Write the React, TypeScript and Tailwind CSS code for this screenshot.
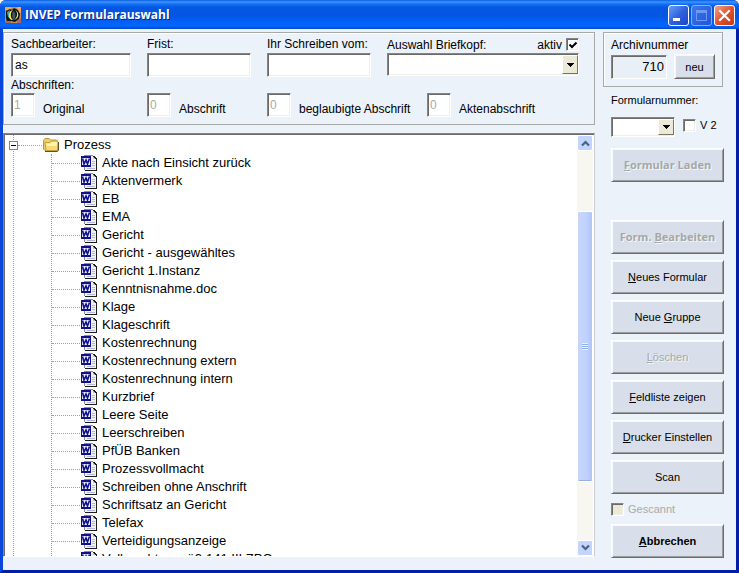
import type { ReactNode } from "react";

const FILES = [
  "Akte nach Einsicht zurück",
  "Aktenvermerk",
  "EB",
  "EMA",
  "Gericht",
  "Gericht - ausgewähltes",
  "Gericht 1.Instanz",
  "Kenntnisnahme.doc",
  "Klage",
  "Klageschrift",
  "Kostenrechnung",
  "Kostenrechnung extern",
  "Kostenrechnung intern",
  "Kurzbrief",
  "Leere Seite",
  "Leerschreiben",
  "PfÜB Banken",
  "Prozessvollmacht",
  "Schreiben ohne Anschrift",
  "Schriftsatz an Gericht",
  "Telefax",
  "Verteidigungsanzeige",
  "Vollmacht gemäß 141 III ZPO",
];

const COPIES = [
  { id: "original", label: "Original", value: "1" },
  { id: "abschrift", label: "Abschrift", value: "0" },
  { id: "beglaubigt", label: "beglaubigte Abschrift", value: "0" },
  { id: "akten", label: "Aktenabschrift", value: "0" },
];

const SUNKEN =
  "border border-t-[#858585] border-l-[#858585] border-r-white border-b-white shadow-[inset_1px_1px_0_#6b6a66,inset_-1px_-1px_0_#f0efe6] outline-none";

const RAISED =
  "border border-t-white border-l-white border-r-[#6e6d68] border-b-[#6e6d68] bg-[#d8dfeb] shadow-[inset_1px_1px_0_#f5f8fc,inset_-1px_-1px_0_#9b9c9e]";

function AppIcon() {
  return (
    <svg className="h-4 w-4 shrink-0" viewBox="0 0 16 16">
      <rect width="16" height="16" fill="#d08a50" />
      <path d="M0 0h6v3H0zM12 0h4v6h-3z" fill="#f0a860" />
      <path d="M1 4l4-2 2 1 2-2 4 2 2 4-1 5-4 3-4-1-4 1-1-4z" fill="#0c1616" />
      <path d="M2 5l3-2-1 4 2 5-3-2z" fill="#4aa8a0" />
      <path d="M8 3C5 5 5 11 8 13c-3 0-4-2-4-5s1-4 4-5z" fill="#f6f04a" />
      <path d="M8 4c2 1 3 3 2 7l-2 2C7 10 7 7 8 4z" fill="#4a545e" />
      <path d="M10 3c3 2 3 7-1 10 5-1 6-8 1-10z" fill="#f0e84a" />
      <path d="M0 14h6v2H0zM12 14l4-3v5h-4z" fill="#a8685c" />
    </svg>
  );
}

function FolderIcon() {
  return (
    <svg className="h-4 w-4 shrink-0" viewBox="0 0 16 16">
      <path d="M.5 3.500L2 1.500h4l1.500 1.500h6l1 1v9.500H2L.5 12z" fill="#f0cf62" stroke="#b8963c" />
      <path d="M2 5.500h5L8.500 4H14l1 1-.5 8.500H3z" fill="#f7dc74" stroke="#c4a040" />
      <path d="M3 6.500h4.500L9 5h5l-.5 4H3.500z" fill="#fff3b4" />
      <path d="M2 14.500h12.500l1-1.500V5" fill="none" stroke="#5e502a" />
    </svg>
  );
}

function WordIcon() {
  return (
    <svg className="h-4 w-4 shrink-0" viewBox="0 0 16 16" shapeRendering="crispEdges">
      <path d="M3 0h9v15H3z" fill="#8a8c94" />
      <path d="M4 1h7v13H4z" fill="#fff" />
      <path d="M7 1h6l3 3v12H4v-1h3z" fill="#1c1c1c" />
      <path d="M6 1h6v3h3v11H4v-3h2z" fill="#f0f1f6" />
      <path d="M12 2v2h2z" fill="#c4c4c4" />
      <path d="M11 6h3v1h-3zM11 8h3v1h-3zM11 10h3v1h-3zM6 13h8v1H6z" fill="#b4bad0" />
      <rect y="1" width="10" height="11" fill="#10108a" />
      <rect x="1" y="3" width="8" height="7" fill="#e8ebff" />
      <path d="M1.500 3.500L3 9l2-4 1.500 4 2-5.500" fill="none" stroke="#10108a" strokeWidth="1.600" shapeRendering="auto" />
    </svg>
  );
}

function DropArrow() {
  return (
    <span className="pointer-events-none absolute top-[2px] right-[1px] bottom-[2px] flex w-4 items-center justify-center border border-t-white border-l-white border-r-[#77756a] border-b-[#77756a] bg-[#ece9d8]">
      <svg className="h-1 w-[7px]" viewBox="0 0 7 4" shapeRendering="crispEdges">
        <path d="M0 0h7v1H6v1H5v1H4v1H3V3H2V2H1V1H0z" fill="#000" />
      </svg>
    </span>
  );
}

function Button({ children, bold, disabled }: { children: ReactNode; bold?: boolean; disabled?: boolean }) {
  return (
    <button
      disabled={disabled}
      className={`h-[34px] w-full text-[11px] ${RAISED} ${bold ? "font-bold" : ""} ${
        bold && disabled ? "font-['Open_Sans',sans-serif]" : ""
      } ${disabled ? "text-[#a5a8a6] [text-shadow:1px_1px_0_#f3f6fa]" : "text-black"}`}
    >
      {children}
    </button>
  );
}

function Field({ id, label, value = "" }: { id: string; label: string; value?: string }) {
  return (
    <div className="flex flex-col">
      <label htmlFor={id} className="leading-[17px] whitespace-nowrap">{label}</label>
      <input id={id} defaultValue={value} className={`h-6 w-full bg-white px-[3px] ${SUNKEN}`} />
    </div>
  );
}

function TitleBar() {
  return (
    <header className="flex h-[29px] shrink-0 items-center bg-[linear-gradient(180deg,#0a5be0_0%,#3c95ff_7%,#1470f4_14%,#0558e2_25%,#0455e3_55%,#0264fb_80%,#0266fd_90%,#0247cc_100%)] pr-1 pl-[5px]">
      <AppIcon />
      <h1 className="flex-1 pl-1 font-['Open_Sans',sans-serif] text-[12px] font-bold text-white [text-shadow:1px_1px_0_#0a2a80]">
        INVEP Formularauswahl
      </h1>
      <div className="flex gap-[2px] pt-[2px]">
        <button aria-label="Minimieren" className="h-[21px] w-[21px] rounded-[3px] border border-white bg-linear-to-br from-[#6f9cf4] via-[#2f62e0] to-[#1b46c4]">
          <svg viewBox="0 0 19 19" className="h-[19px] w-[19px]"><path d="M4 12h7v3H4z" fill="#fff" /></svg>
        </button>
        <button aria-label="Maximieren" disabled className="h-[21px] w-[21px] rounded-[3px] border border-[#86aef5] bg-linear-to-br from-[#3b78ee] to-[#1f55d8]">
          <svg viewBox="0 0 19 19" className="h-[19px] w-[19px]">
            <path d="M4.500 5v9.500h10V5" fill="none" stroke="#6d99f0" />
            <path d="M4 4h11v3H4z" fill="#6d99f0" />
          </svg>
        </button>
        <button aria-label="Schließen" className="h-[21px] w-[21px] rounded-[3px] border border-white bg-linear-to-br from-[#f0a088] via-[#e2512c] to-[#c53a16]">
          <svg viewBox="0 0 19 19" className="h-[19px] w-[19px]">
            <path d="M5 5l9 9M14 5l-9 9" stroke="#fff" strokeWidth="2.200" strokeLinecap="square" />
          </svg>
        </button>
      </div>
    </header>
  );
}

function FormPanel() {
  return (
    <section className="border border-[#a6a9a6] px-[7px] pt-[3px] pb-[7px] text-[12px] shadow-[inset_1px_1px_0_#fff]">
      <div className="grid grid-cols-[120px_104px_104px_192px] gap-4">
        <Field id="sachbearbeiter" label="Sachbearbeiter:" value="as" />
        <Field id="frist" label="Frist:" />
        <Field id="schreiben" label="Ihr Schreiben vom:" />
        <div>
          <div className="flex h-[17px] items-center justify-between">
            <label htmlFor="briefkopf">Auswahl Briefkopf:</label>
            <label className="flex items-center gap-1">
              aktiv
              <span className="relative flex">
                <input type="checkbox" defaultChecked className={`peer h-[13px] w-[13px] appearance-none bg-white ${SUNKEN}`} />
                <svg className="pointer-events-none absolute top-[3px] left-[3px] hidden h-2 w-2 peer-checked:block" viewBox="0 0 8 8">
                  <path d="M.5 3.500L3 6l4.500-4.500" fill="none" stroke="#000" strokeWidth="2" />
                </svg>
              </span>
            </label>
          </div>
          <div className="relative">
            <select id="briefkopf" className={`block h-[23px] w-full appearance-none bg-white px-1 ${SUNKEN}`} />
            <DropArrow />
          </div>
        </div>
      </div>
      <p className="leading-4">Abschriften:</p>
      <div className="grid grid-cols-[120px_104px_144px_auto] gap-4">
        {COPIES.map((c) => (
          <div key={c.id} className="flex gap-2">
            <input id={c.id} disabled defaultValue={c.value} className={`h-6 w-6 bg-white px-[2px] text-[#aaa8a0] ${SUNKEN}`} />
            <label htmlFor={c.id} className="pt-2 leading-4 whitespace-nowrap">{c.label}</label>
          </div>
        ))}
      </div>
    </section>
  );
}

function ScrollBar() {
  const arrow = "flex h-4 shrink-0 items-center justify-center rounded-[2px] border border-white bg-[#c3d4fd]";
  return (
    <div className="flex w-4 shrink-0 flex-col bg-[#f7f6f0]">
      <button aria-label="Nach oben" className={arrow}>
        <svg className="h-[7px] w-[9px]" viewBox="0 0 9 7"><path d="M1 5.500l3.500-3.500L8 5.500" fill="none" stroke="#4d6185" strokeWidth="2.200" /></svg>
      </button>
      <div className="flex-[60]" />
      <div className="flex flex-[270] items-center justify-center rounded-[2px] border border-white bg-[linear-gradient(90deg,#c8d6fb,#bfd1fe_60%,#b0c4f5)] shadow-[inset_0_-1px_0_#98b0e8]">
        <span className="h-[7px] w-[6px] bg-[repeating-linear-gradient(180deg,#eef4fe_0_1px,#8cb0f8_1px_2px)]" />
      </div>
      <div className="flex-[58]" />
      <button aria-label="Nach unten" className={arrow}>
        <svg className="h-[7px] w-[9px]" viewBox="0 0 9 7"><path d="M1 1.500l3.500 3.500L8 1.500" fill="none" stroke="#4d6185" strokeWidth="2.200" /></svg>
      </button>
    </div>
  );
}

function Tree() {
  return (
    <section className="mt-2 flex min-h-0 flex-1 border border-t-[#858585] border-l-[#858585] border-r-[#c9ccd0] border-b-white bg-white pt-px pr-px pl-px shadow-[inset_1px_1px_0_#6b6a66]">
      <div className="min-w-0 flex-1 overflow-hidden">
        <div className="relative ml-2 border-l border-dotted border-[#a0a0a0] pt-px">
          <span className="absolute top-[6px] -left-[5px] flex h-[9px] w-[9px] items-center justify-center border border-[#848484] bg-white">
            <span className="h-px w-[5px] bg-black" />
          </span>
          <div className="flex h-[18px] items-center">
            <span className="ml-1 w-6 border-t border-dotted border-[#a0a0a0]" />
            <span className="pl-px"><FolderIcon /></span>
            <span className="pl-[5px]">Prozess</span>
          </div>
          <ul className="ml-[37px] border-l border-dotted border-[#a0a0a0]">
            {FILES.map((name) => (
              <li key={name} className="flex h-[18px] items-center">
                <span className="mr-px w-7 border-t border-dotted border-[#a0a0a0]" />
                <WordIcon />
                <span className="pl-[5px]">{name}</span>
              </li>
            ))}
          </ul>
        </div>
      </div>
      <ScrollBar />
    </section>
  );
}

function Sidebar() {
  return (
    <aside className="w-[133px] shrink-0 text-[11px]">
      <section className="mr-[13px] border border-[#a6a9a6] px-[7px] pt-1 pb-[7px] shadow-[inset_1px_1px_0_#fff]">
        <label htmlFor="archiv" className="block text-[12px] leading-[17px]">Archivnummer</label>
        <div className="flex items-center justify-between">
          <input id="archiv" readOnly defaultValue="710" className={`h-6 w-14 bg-[#e8eff7] px-[2px] text-right text-[13px] ${SUNKEN}`} />
          <button className={`h-[25px] w-[41px] ${RAISED}`}>neu</button>
        </div>
      </section>
      <div className="pt-[5px] pr-3 pl-2">
        <label htmlFor="formularnummer" className="block leading-4">Formularnummer:</label>
        <div className="mt-[9px] flex items-start">
          <span className="relative w-16">
            <select id="formularnummer" className={`block h-5 w-full appearance-none bg-white px-1 ${SUNKEN}`} />
            <DropArrow />
          </span>
          <label className="ml-2 flex items-center gap-1">
            <input type="checkbox" className={`h-[13px] w-[13px] appearance-none bg-white ${SUNKEN}`} />
            V 2
          </label>
        </div>
        <div className="mt-[11px]">
          <Button bold disabled><u>F</u>ormular Laden</Button>
        </div>
        <div className="mt-[38px] flex flex-col gap-[6px]">
          <Button bold disabled>Form. <u>B</u>earbeiten</Button>
          <Button><u>N</u>eues Formular</Button>
          <Button>Neue <u>G</u>ruppe</Button>
          <Button disabled><u>L</u>öschen</Button>
          <Button><u>F</u>eldliste zeigen</Button>
          <Button><u>D</u>rucker Einstellen</Button>
          <Button>Scan</Button>
        </div>
        <label className="flex h-[30px] items-center gap-1 text-[#a9aaa5]">
          <input type="checkbox" disabled className={`h-[13px] w-[13px] appearance-none bg-[#ece9d8] ${SUNKEN}`} />
          Gescannt
        </label>
        <Button bold><u>A</u>bbrechen</Button>
      </div>
    </aside>
  );
}

export default function App() {
  return (
    <div className="flex h-screen flex-col overflow-hidden rounded-t-[6px] bg-[#0a42d2] font-['Liberation_Sans',Arial,sans-serif] text-[13px] leading-4 text-black">
      <TitleBar />
      <div className="flex min-h-0 flex-1 gap-2 border-x-[3px] border-b-[3px] border-r-[#001eaa] border-b-[#001eaa] border-l-[#0a45dc] bg-[#ebf2f9] pt-[3px] pb-[13px]">
        <main className="flex min-w-0 flex-1 flex-col">
          <FormPanel />
          <Tree />
        </main>
        <Sidebar />
      </div>
    </div>
  );
}
